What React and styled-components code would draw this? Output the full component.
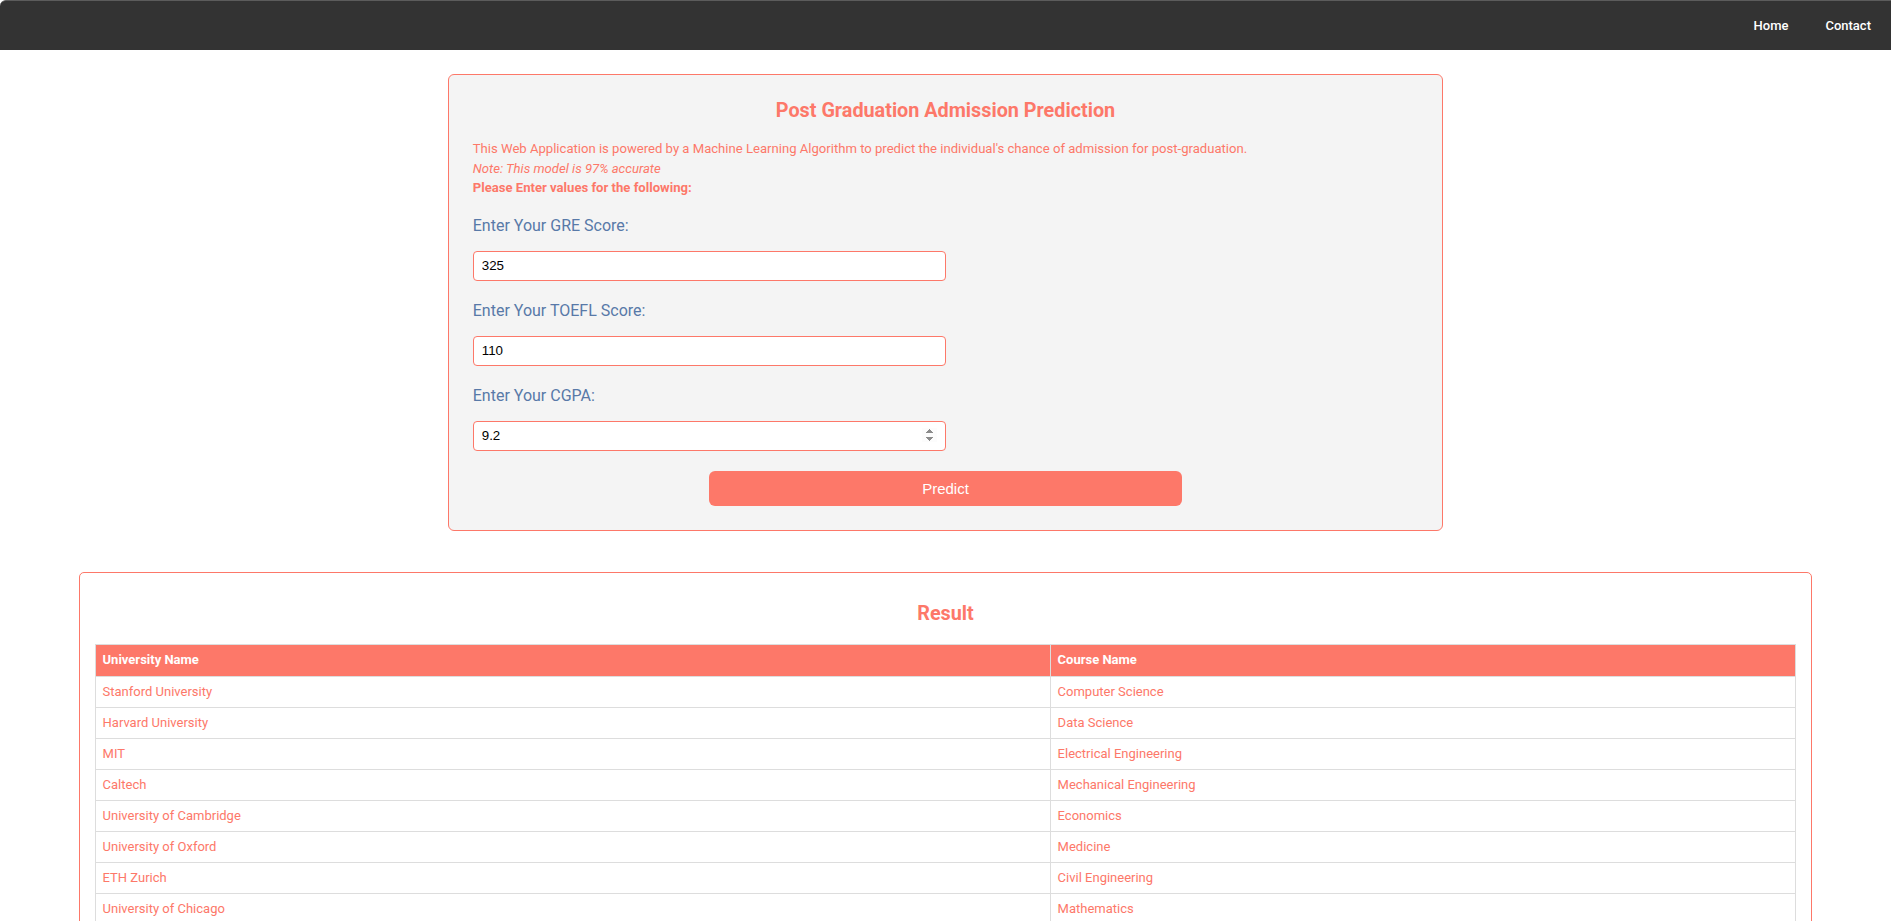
import { useState } from 'react';
import styled, { createGlobalStyle } from 'styled-components';

const GlobalStyle = createGlobalStyle`
  html, body {
    margin: 0;
    padding: 0;
    background: #fff;
    font-family: Roboto, "Liberation Sans", Arial, sans-serif;
  }
  * { box-sizing: border-box; }
`;

const SALMON = '#fd7869';

const NavBar = styled.nav`
  height: 50px;
  background: #333;
  border-top: 1px solid #5c5c5c;
  border-top-left-radius: 6px;
  display: flex;
  justify-content: flex-end;
  align-items: center;
  padding-right: 20px;
  gap: 37px;
`;

const NavLink = styled.a`
  color: #fff;
  font-size: 13px;
  font-weight: 500;
  text-decoration: none;
  cursor: pointer;
`;

const Main = styled.main`
  padding-top: 24px;
  padding-bottom: 40px;
`;

const FormCard = styled.section`
  box-sizing: content-box;
  width: 50%;
  margin: 0 auto;
  padding: 24px;
  background: #f4f4f4;
  border: 1px solid ${SALMON};
  border-radius: 6px;
`;

const Title = styled.h2`
  margin: ${(p) => p.$margin || '0'};
  text-align: center;
  color: ${SALMON};
  font-size: 19.8px;
  line-height: 24px;
  font-weight: 700;
`;

const Intro = styled.div`
  margin-top: 16px;
  margin-bottom: 18px;
`;

const IntroLine = styled.p`
  margin: 0;
  color: ${SALMON};
  font-size: 13.1px;
  line-height: 19.5px;
  font-style: ${(p) => (p.$italic ? 'italic' : 'normal')};
  font-weight: ${(p) => (p.$bold ? 700 : 400)};
`;

const Label = styled.label`
  display: block;
  color: #5879a8;
  font-size: 16px;
  line-height: 20px;
  margin-bottom: 15px;
`;

const Input = styled.input`
  display: block;
  width: 50%;
  height: 30px;
  margin-bottom: 20px;
  padding: 0 8px;
  background: #fff;
  border: 1px solid ${SALMON};
  border-radius: 4px;
  font-family: "Liberation Sans", Arial, sans-serif;
  font-size: 13.33px;
  color: #000;
  outline: none;
`;

const PredictButton = styled.button`
  display: block;
  width: 50%;
  height: 35px;
  margin: 0 auto;
  background: ${SALMON};
  color: #fff;
  border: none;
  border-radius: 6px;
  font-family: "Liberation Sans", Arial, sans-serif;
  font-size: 15px;
  cursor: pointer;
`;

const ResultCard = styled.section`
  box-sizing: content-box;
  width: 90%;
  margin: 41px auto 0;
  padding: 15px;
  background: #fff;
  border: 1px solid ${SALMON};
  border-radius: 5px;
`;

const Table = styled.table`
  width: 100%;
  border-collapse: collapse;
  border: 1px solid #ddd;
`;

const HeadCell = styled.th`
  width: ${(p) => p.$width || 'auto'};
  background: ${SALMON};
  color: #fff;
  font-size: 13px;
  font-weight: 700;
  line-height: 14px;
  text-align: left;
  padding: 8px 7px 9px;
  border: 1px solid #ddd;
`;

const Cell = styled.td`
  color: ${SALMON};
  font-size: 13px;
  line-height: 14px;
  padding: 8px 7px;
  border: 1px solid #ddd;
`;

const results = [
  { university: 'Stanford University', course: 'Computer Science' },
  { university: 'Harvard University', course: 'Data Science' },
  { university: 'MIT', course: 'Electrical Engineering' },
  { university: 'Caltech', course: 'Mechanical Engineering' },
  { university: 'University of Cambridge', course: 'Economics' },
  { university: 'University of Oxford', course: 'Medicine' },
  { university: 'ETH Zurich', course: 'Civil Engineering' },
  { university: 'University of Chicago', course: 'Mathematics' },
];

export default function App() {
  const [gre, setGre] = useState('325');
  const [toefl, setToefl] = useState('110');
  const [cgpa, setCgpa] = useState('9.2');

  return (
    <>
      <GlobalStyle />
      <NavBar>
        <NavLink>Home</NavLink>
        <NavLink>Contact</NavLink>
      </NavBar>

      <Main>
        <FormCard>
          <Title>Post Graduation Admission Prediction</Title>
          <Intro>
            <IntroLine>
              This Web Application is powered by a Machine Learning Algorithm to predict the individual's chance of admission for post-graduation.
            </IntroLine>
            <IntroLine $italic>Note: This model is 97% accurate</IntroLine>
            <IntroLine $bold>Please Enter values for the following:</IntroLine>
          </Intro>

          <Label htmlFor="gre">Enter Your GRE Score:</Label>
          <Input id="gre" type="text" value={gre} onChange={(e) => setGre(e.target.value)} />

          <Label htmlFor="toefl">Enter Your TOEFL Score:</Label>
          <Input id="toefl" type="text" value={toefl} onChange={(e) => setToefl(e.target.value)} />

          <Label htmlFor="cgpa">Enter Your CGPA:</Label>
          <Input id="cgpa" type="number" step="0.1" autoFocus value={cgpa} onChange={(e) => setCgpa(e.target.value)} />

          <PredictButton type="button">Predict</PredictButton>
        </FormCard>

        <ResultCard>
          <Title $margin="14px 0 18px">Result</Title>
          <Table>
            <thead>
              <tr>
                <HeadCell $width="56.15%">University Name</HeadCell>
                <HeadCell>Course Name</HeadCell>
              </tr>
            </thead>
            <tbody>
              {results.map((r) => (
                <tr key={r.university}>
                  <Cell>{r.university}</Cell>
                  <Cell>{r.course}</Cell>
                </tr>
              ))}
            </tbody>
          </Table>
        </ResultCard>
      </Main>
    </>
  );
}
